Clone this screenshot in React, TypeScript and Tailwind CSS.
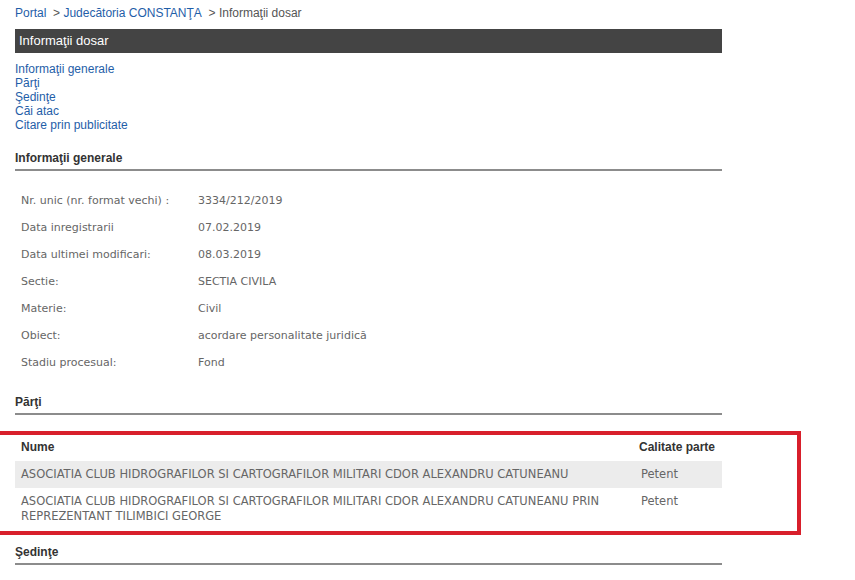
const LINKS = ["Informaţii generale", "Părţi", "Şedinţe", "Căi atac", "Citare prin publicitate"];

const INFO: [string, string][] = [
  ["Nr. unic (nr. format vechi) :", "3334/212/2019"],
  ["Data inregistrarii", "07.02.2019"],
  ["Data ultimei modificari:", "08.03.2019"],
  ["Sectie:", "SECTIA CIVILA"],
  ["Materie:", "Civil"],
  ["Obiect:", "acordare personalitate juridică"],
  ["Stadiu procesual:", "Fond"],
];

const PARTI = [
  { nume: "ASOCIATIA CLUB HIDROGRAFILOR SI CARTOGRAFILOR MILITARI CDOR ALEXANDRU CATUNEANU", calitate: "Petent" },
  {
    nume: "ASOCIATIA CLUB HIDROGRAFILOR SI CARTOGRAFILOR MILITARI CDOR ALEXANDRU CATUNEANU PRIN REPREZENTANT TILIMBICI GEORGE",
    calitate: "Petent",
  },
];

function SectionTitle({ children }: { children: React.ReactNode }) {
  return (
    <div className="border-b-2 border-[#8c8c8c] pb-[3px] text-[12px] font-bold leading-[16px] text-[#333]">
      {children}
    </div>
  );
}

export default function App() {
  return (
    <div className="min-h-[580px] w-[855px] overflow-hidden bg-white font-['Liberation_Sans',Arial,sans-serif]">
      <div className="ml-[15px] w-[707px]">
        {/* breadcrumb */}
        <div className="pt-[5px] text-[12px] leading-[16px] text-[#555]">
          <a className="text-[#1f5ea8]">Portal</a>
          <span>&nbsp; &gt; </span>
          <a className="text-[#1f5ea8]">Judecătoria CONSTANŢA</a>
          <span>&nbsp; &gt; Informaţii dosar</span>
        </div>

        {/* titlu */}
        <div className="mt-[8px] flex h-[24px] items-center bg-[#444444] pl-[4px] text-[13px] text-white">
          Informaţii dosar
        </div>

        {/* meniu */}
        <div className="mt-[9px] flex flex-col text-[12px] leading-[14px] text-[#1f5ea8]">
          {LINKS.map((l) => (
            <a key={l}>{l}</a>
          ))}
        </div>

        {/* informatii generale */}
        <div className="mt-[18px]">
          <SectionTitle>Informaţii generale</SectionTitle>
          <div className="mt-[17px] font-['DejaVu_Sans',Verdana,sans-serif] text-[11px] text-[#666]">
            {INFO.map(([k, v]) => (
              <div key={k} className="flex h-[27px] items-center">
                <div className="w-[183px] pl-[6px]">{k}</div>
                <div>{v}</div>
              </div>
            ))}
          </div>
        </div>

        {/* parti */}
        <div className="mt-[17px]">
          <SectionTitle>Părţi</SectionTitle>
        </div>

        <div className="-ml-[20px] mt-[16px] w-[806px] border-4 border-[#d81f2b] pl-[16px]">
          <div className="w-[707px]">
            <div className="flex h-[26px] items-center pb-[2px] text-[12px] font-bold text-[#333]">
              <div className="w-[624px] pl-[6px]">Nume</div>
              <div>Calitate parte</div>
            </div>
            {PARTI.map((p, i) => (
              <div
                key={i}
                className={
                  "flex font-['DejaVu_Sans',Verdana,sans-serif] text-[11.5px] leading-[15px] text-[#666] " +
                  (i === 0 ? "bg-[#ececec] py-[6px]" : "pt-[6px] pb-[7px]")
                }
              >
                <div className="w-[626px] pl-[6px] pr-[20px]">{p.nume}</div>
                <div>{p.calitate}</div>
              </div>
            ))}
          </div>
        </div>

        {/* sedinte */}
        <div className="mt-[9px]">
          <SectionTitle>Şedinţe</SectionTitle>
        </div>
      </div>
    </div>
  );
}
